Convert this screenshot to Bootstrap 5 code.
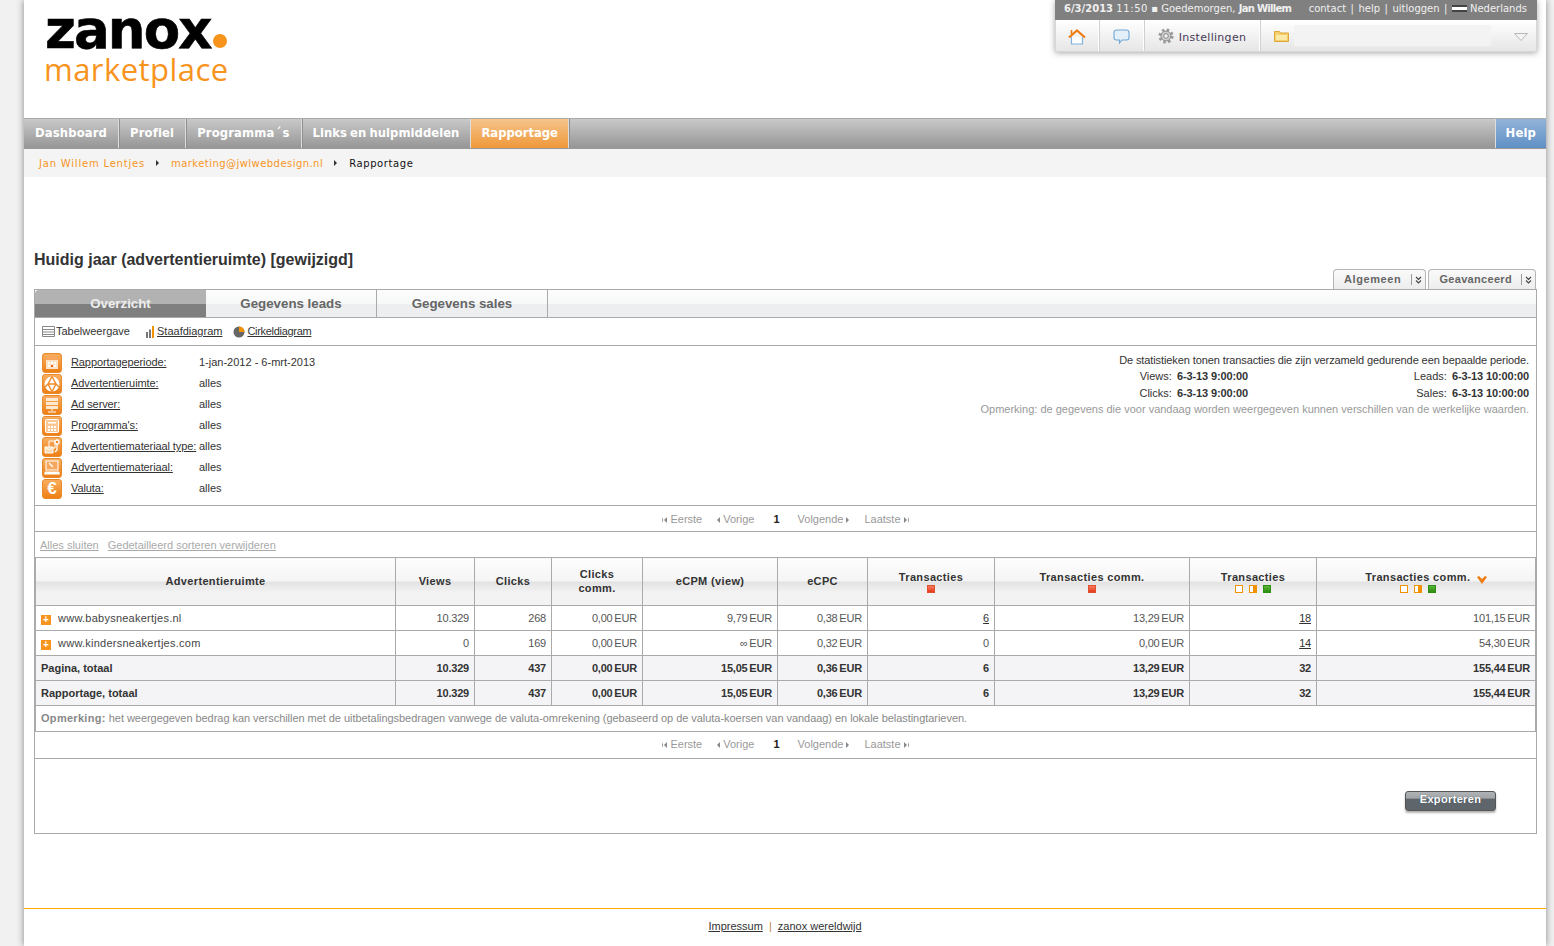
<!DOCTYPE html>
<html lang="nl">

<head>
    <meta charset="UTF-8">
    <meta name="viewport" content="width=device-width, initial-scale=1">
    <title>zanox marketplace - Rapportage</title>
    <link href="https://cdn.jsdelivr.net/npm/bootstrap@5.3.2/dist/css/bootstrap.min.css" rel="stylesheet">
    <script src="https://cdn.jsdelivr.net/npm/bootstrap@5.3.2/dist/js/bootstrap.bundle.min.js"></script>
    <style>
        body {
            background: #f1f1f1;
            font-family: "Liberation Sans", Arial, sans-serif;
            font-size: 11px;
            color: #333;
            line-height: 1.2;
        }

        a {
            color: #333;
        }

        .page-wrap {
            width: 1522px;
            height: 946px;
            margin-left: 24px;
            background: #fff;
            box-shadow: 0 0 7px rgba(0, 0, 0, .45);
            overflow: hidden;
        }

        /* kop */
        .site-head {
            height: 118px;
        }

        .logo-box {
            padding: 0 0 0 21px;
            width: 300px;
        }

        .logo-top {
            font-family: "DejaVu Sans", sans-serif;
            font-weight: 700;
            font-size: 53px;
            line-height: 40px;
            letter-spacing: -1.9px;
            color: #000;
            padding-top: 10px;
            -webkit-text-stroke: .6px #000;
        }

        .logo-dot {
            display: inline-block;
            width: 14px;
            height: 14px;
            border-radius: 50%;
            background: #f7941d;
            margin-left: 3px;
        }

        .logo-bottom {
            font-family: "Open Sans", sans-serif;
            font-weight: 400;
            font-size: 31px;
            line-height: 38px;
            letter-spacing: .45px;
            color: #f7941d;
            margin: 0 0 0 -1px;
        }

        .user-box {
            width: 482px;
            height: 52px;
            margin-right: 9px;
            box-shadow: 0 1px 6px rgba(0, 0, 0, .35);
        }

        .user-top {
            height: 20px;
            background: #808080;
            color: #f0f0f0;
            font-family: "DejaVu Sans", sans-serif;
            font-size: 10px;
            padding: 0 10px 3px 9px;
            white-space: nowrap;
        }

        .top-time {
            letter-spacing: .6px;
        }

        .top-name {
            letter-spacing: -.7px;
        }

        .top-sep {
            margin: 0 4.500px;
        }

        .flag-nl {
            display: inline-block;
            width: 15px;
            height: 7px;
            background: linear-gradient(#444 0, #444 33%, #fff 33%, #fff 66%, #444 66%);
            margin: 0 3px 0 0;
            vertical-align: -0.5px;
        }

        .user-tools {
            height: 32px;
            background: linear-gradient(#fff, #e6e6e6);
            border: 1px solid #d8d8d8;
            border-top: 0;
        }

        .tool-cell {
            height: 100%;
            border-right: 1px solid #fff;
            box-shadow: 1px 0 0 #d0d0d0;
            margin-right: 1px;
            color: #453a55;
            font-family: "DejaVu Sans", sans-serif;
            letter-spacing: .3px;
        }

        .tool-home { width: 43px; padding-top: 2px; }
        .tool-chat { width: 44px; padding-top: 2px; }
        .tool-set { width: 115px; gap: 5px; }

        .tool-label {
            padding-top: 5px;
        }

        .tool-folder {
            margin-left: 13px;
        }

        .tool-search {
            width: 197px;
            height: 21px;
            background: #f3f3f3;
            margin-left: 5px;
        }

        .tool-caret {
            margin: 2px 0 0 23px;
        }

        /* menu */
        .main-menu {
            height: 31px;
            border-top: 1px solid #aaa;
            border-bottom: 1px solid #999;
            background: linear-gradient(#c9c9c9, #969696);
        }

        .menu-item {
            font-family: "DejaVu Sans", sans-serif;
            font-weight: 700;
            font-size: 11.6px;
            letter-spacing: .15px;
            color: #fff;
            padding: 8px 11px 0;
            text-decoration: none;
            border-right: 1px solid #ddd;
            height: 100%;
            box-shadow: 1px 0 0 #8f8f8f;
        }

        .menu-acute {
            margin: 0 1px;
        }

        .menu-links {
            letter-spacing: .05px;
            word-spacing: -1px;
        }

        .menu-active {
            background: linear-gradient(#f6c48a, #ef983b);
            letter-spacing: 0;
            padding: 8px 10px 0;
        }

        .menu-help {
            background: linear-gradient(#92b3d9, #6090c6);
            margin-left: auto;
            border-right: 0;
            border-left: 1px solid #ddd;
            box-shadow: none;
            padding: 8px 10px 0;
        }

        .crumb-bar {
            height: 28px;
            background: #f4f4f4;
            padding: 2px 0 0 15px;
            font-family: "DejaVu Sans", sans-serif;
            font-size: 10px;
            letter-spacing: .8px;
        }

        .crumb-bar a {
            color: #f7941d;
            text-decoration: none;
        }

        .crumb-bar a.crumb-mail {
            letter-spacing: .45px;
        }

        .crumb-now {
            color: #111;
            letter-spacing: .6px;
            margin-top: -1px;
        }

        .crumb-arrow {
            width: 0;
            height: 0;
            border-top: 3px solid transparent;
            border-bottom: 3px solid transparent;
            border-left: 3px solid #333;
            margin: -3px 12px 0 11px;
        }

        /* titel */
        .title-row {
            height: 112px;
            padding: 0 10px;
        }

        .page-title {
            font-size: 16px;
            font-weight: 700;
            color: #333;
            margin: 0 0 19px;
            line-height: 20px;
        }

        .mode-btn {
            height: 20px;
            background: linear-gradient(#fafafa, #ededed);
            border: 1px solid #b5b5b5;
            border-bottom: 0;
            border-radius: 4px 4px 0 0;
            padding: 0 2px 0 10px;
            font-size: 11px;
            font-weight: 700;
            color: #666;
            letter-spacing: .32px;
            gap: 9px;
        }

        .mode-alg {
            letter-spacing: .6px;
            gap: 10px;
        }

        .mode-btn + .mode-btn {
            margin-left: 2px;
        }

        .mode-sep {
            border-left: 1px solid #999;
            height: 11px;
            padding: 2px 0 0 3px;
            width: 12px;
        }

        .mode-sep svg {
            display: block;
        }

        /* paneel */
        .report-panel {
            margin: 0 9px 0 10px;
            height: 545px;
            border: 1px solid #aaa;
        }

        .tab-bar {
            height: 28px;
            background: linear-gradient(#fcfcfc 0, #f7f8f8 50%, #eceef0 50%, #eceef0 100%);
            border-bottom: 1px solid #aaa;
        }

        .tab-link {
            width: 171px;
            height: 27px;
            display: block;
            text-align: center;
            font-size: 13.3px;
            font-weight: 700;
            line-height: 27px;
            color: #666;
            text-decoration: none;
            border-right: 1px solid #aaa;
        }

        .tab-on {
            color: #eee;
            background: linear-gradient(#b2b2b2 0, #b2b2b2 50%, #7f7f7f 50%, #7f7f7f 100%);
            border-top-left-radius: 4px;
            border-right: 0;
        }

        .view-row {
            height: 28px;
            border-bottom: 1px solid #aaa;
            padding-left: 7px;
        }

        .view-item {
            margin-right: 15px;
        }

        .view-item + .view-item {
            margin-right: 11px;
        }

        .view-item svg {
            margin-right: 1px;
        }

        .view-pie {
            letter-spacing: -.3px;
        }

        .filter-zone {
            height: 160px;
            border-bottom: 1px solid #aaa;
            padding: 6px 7px 0;
        }

        .filter-row {
            height: 21px;
        }

        .filter-icon {
            width: 20px;
            height: 20px;
            border-radius: 3px;
            background: linear-gradient(#f9ad5f, #ee7f14);
            border: 1px solid #e68a2c;
            margin-right: 9px;
            flex: none;
            color: #fff;
            font-size: 17px;
            font-weight: 700;
            line-height: 18px;
            text-align: center;
        }

        .filter-icon svg {
            display: block;
        }

        .filter-name {
            width: 128px;
            flex: none;
            letter-spacing: -.1px;
        }

        .info-line {
            line-height: 16.3px;
        }

        .info-top {
            letter-spacing: -.1px;
        }

        .info-wide {
            width: 281px;
            text-align: right;
        }

        .info-wide b {
            letter-spacing: -.12px;
            margin-left: 2px;
        }

        .info-note {
            color: #999;
        }

        .pager-row {
            height: 26px;
            border-bottom: 1px solid #aaa;
            color: #999;
            gap: 15px;
            padding-top: 3px;
        }

        .pager-low {
            height: 27px;
            padding-top: 0;
        }

        .pager-row b {
            color: #222;
            margin: 0 3px 0 4px;
        }

        .pg-arrow {
            display: inline-block;
            width: 0;
            height: 0;
            border-top: 3px solid transparent;
            border-bottom: 3px solid transparent;
            vertical-align: 0;
        }

        .pg-left {
            border-right: 3px solid #888;
            margin-right: 3px;
        }

        .pg-right {
            border-left: 3px solid #888;
            margin-left: 3px;
        }

        .pg-stop-l {
            border-left: 1px solid #888;
            padding-left: 1px;
        }

        .pg-stop-r {
            border-right: 1px solid #888;
            padding-right: 1px;
        }

        .sort-row {
            height: 25px;
            padding: 3px 0 0 5px;
            gap: 9px;
        }

        .sort-row a {
            color: #aaa;
        }

        .rpt-table {
            table-layout: fixed;
            width: 1501px;
            margin: 0;
            border-collapse: collapse;
            border: 1px solid #aaa;
            font-size: 11px;
            color: #555;
        }

        .w-a { width: 360px; }
        .w-b { width: 79px; }
        .w-c { width: 77px; }
        .w-d { width: 91px; }
        .w-e { width: 135px; }
        .w-f { width: 90px; }
        .w-g { width: 127px; }
        .w-h { width: 195px; }
        .w-i { width: 219px; }

        .rpt-table th {
            height: 48px;
            padding: 0 5px;
            text-align: center;
            vertical-align: middle;
            border: 1px solid #aaa;
            color: #333;
            font-weight: 700;
            letter-spacing: .35px;
            background-color: transparent;
            background-image: linear-gradient(#fdfdfd 0, #f5f5f5 48%, #e2e2e2 50%, #f3f3f3 72%, #f3f3f3 100%);
        }

        .rpt-table th.th-legend {
            padding-top: 6px;
        }

        .rpt-table td {
            height: 25px;
            padding: 1px 5px 0;
            text-align: right;
            vertical-align: middle;
            border: 1px solid #aaa;
            color: #555;
            background-color: #fff;
            letter-spacing: -.2px;
            word-spacing: -1px;
        }

        .rpt-table td.cell-name {
            text-align: left;
            color: #444;
            letter-spacing: 0;
            word-spacing: 0;
        }

        .rpt-table .total-row td {
            background-color: #f4f4f6;
            color: #333;
            font-weight: 700;
        }

        .rpt-table .total-row td.cell-name {
            color: #333;
        }

        .rpt-table td.note-cell {
            text-align: left;
            color: #888;
            height: 26px;
            letter-spacing: -.045px;
            word-spacing: 0;
        }

        .note-cell b {
            letter-spacing: .3px;
        }

        .plus-box {
            display: inline-block;
            width: 10px;
            height: 10px;
            background: #f7941d;
            color: #fff;
            font-size: 10px;
            font-weight: 700;
            line-height: 9px;
            text-align: center;
            margin-right: 7px;
            vertical-align: -1px;
        }

        .site-url {
            letter-spacing: .25px;
        }

        .th-mark {
            display: inline-block;
            width: 8px;
            height: 8px;
            margin: 0 3px;
            vertical-align: top;
        }

        .mark-red {
            background: linear-gradient(#f77b5f, #e63a1c);
            border: 1px solid #e0502f;
        }

        .mark-open {
            background: #fff;
            border: 1px solid #f39200;
        }

        .mark-half {
            background: linear-gradient(90deg, #fff 0, #fff 50%, #f39200 50%);
            border: 1px solid #f39200;
        }

        .mark-green {
            background: linear-gradient(#5cb535, #2c8e12);
            border: 1px solid #2c8e12;
        }

        .th-shift {
            display: inline-block;
            margin-right: 16px;
        }

        .sort-mark {
            margin-left: 3px;
            vertical-align: -3px;
        }

        .export-zone {
            padding: 32px 40px 0 0;
        }

        .export-btn {
            width: 91px;
            height: 20px;
            padding: 0 0 4px;
            border: 1px solid #555;
            border-radius: 3px;
            background: linear-gradient(#b0b3b6 0, #a2a5a8 35%, #5f666b 38%, #5f666b 100%);
            color: #fff;
            font-size: 11px;
            font-weight: 700;
            line-height: 14px;
            letter-spacing: .35px;
            box-shadow: 0 2px 2px rgba(0, 0, 0, .3);
            text-shadow: 0 0 1px #345;
            display: block;
        }

        .foot-line {
            height: 1px;
            margin-top: 74px;
            background: #ffa800;
        }

        .site-foot {
            padding-top: 11px;
            text-align: center;
        }

        .site-foot span {
            margin: 0 3px;
            color: #c08040;
        }
    </style>
</head>

<body>
    <div class="page-wrap">

        <!-- kop -->
        <header class="site-head d-flex justify-content-between">
            <div class="logo-box">
                <div class="logo-top">zanox<span class="logo-dot"></span></div>
                <div class="logo-bottom">marketplace</div>
            </div>
            <div class="user-box">
                <div class="user-top d-flex justify-content-between align-items-center">
                    <div><b>6/3/2013</b> <span class="top-time">11:50</span> ▪ Goedemorgen, <b class="top-name">Jan Willem</b></div>
                    <div>contact<span class="top-sep">|</span>help<span class="top-sep">|</span>uitloggen<span class="top-sep">|</span><span class="flag-nl"></span>Nederlands</div>
                </div>
                <div class="user-tools d-flex align-items-center">
                    <div class="tool-cell tool-home d-flex align-items-center justify-content-center">
                        <svg width="18" height="16" viewBox="0 0 18 16">
                            <path d="M3.5 8v7h11V8" fill="#fff" stroke="#7fb2dc" stroke-width="1.2" />
                            <path d="M1 8.5 9 1.5l8 7" fill="none" stroke="#ee7d11" stroke-width="2.2" />
                            <path d="M3.5 1v4" stroke="#ee7d11" stroke-width="1.6" />
                        </svg>
                    </div>
                    <div class="tool-cell tool-chat d-flex align-items-center justify-content-center">
                        <svg width="17" height="16" viewBox="0 0 17 16">
                            <path d="M3.5 1h10a2.500 2.500 0 0 1 2.500 2.500v5a2.500 2.500 0 0 1-2.500 2.500H9l-2.500 3v-3h-3A2.500 2.500 0 0 1 1 8.500v-5A2.500 2.500 0 0 1 3.500 1z" fill="#e4eff9" stroke="#6ea7d6" stroke-width="1.100" />
                        </svg>
                    </div>
                    <div class="tool-cell tool-set d-flex align-items-center justify-content-center">
                        <svg width="16" height="16" viewBox="0 0 16 16">
                            <circle cx="8" cy="8" r="6.300" fill="none" stroke="#9a9a9a" stroke-width="2.600" stroke-dasharray="2.500 2.450" />
                            <circle cx="8" cy="8" r="5" fill="#ccc" stroke="#888" stroke-width="1" />
                            <circle cx="8" cy="8" r="2.300" fill="#f2f2f2" stroke="#888" stroke-width="1" />
                        </svg>
                        <span class="tool-label">Instellingen</span>
                    </div>
                    <svg class="tool-folder" width="15" height="12" viewBox="0 0 15 12">
                        <path d="M.5 1.500h5l1 1.500h8v8.500H.5z" fill="#f4cf6a" stroke="#dfa63a" />
                        <rect x="2" y="5" width="11" height="5" fill="#fbe9a8" />
                    </svg>
                    <div class="tool-search"></div>
                    <svg class="tool-caret" width="14" height="8" viewBox="0 0 14 8">
                        <path d="M.5.500h13L7 7.500z" fill="#f4f4f4" stroke="#b8b8b8" />
                    </svg>
                </div>
            </div>
        </header>

        <!-- menu -->
        <nav class="main-menu d-flex">
            <a class="menu-item" href="#">Dashboard</a>
            <a class="menu-item" href="#">Profiel</a>
            <a class="menu-item" href="#">Programma<span class="menu-acute">´</span>s</a>
            <a class="menu-item menu-links" href="#">Links en hulpmiddelen</a>
            <a class="menu-item menu-active" href="#">Rapportage</a>
            <a class="menu-item menu-help" href="#">Help</a>
        </nav>
        <div class="crumb-bar d-flex align-items-center">
            <a href="#">Jan Willem Lentjes</a>
            <span class="crumb-arrow"></span>
            <a class="crumb-mail" href="#">marketing@jwlwebdesign.nl</a>
            <span class="crumb-arrow"></span>
            <span class="crumb-now">Rapportage</span>
        </div>

        <!-- titel -->
        <div class="title-row d-flex justify-content-between align-items-end">
            <h1 class="page-title">Huidig jaar (advertentieruimte) [gewijzigd]</h1>
            <div class="d-flex">
                <div class="mode-btn mode-alg d-flex align-items-center">Algemeen <span class="mode-sep"><svg width="7" height="8" viewBox="0 0 7 8"><path d="M1 1l2.500 2.500L6 1M1 4.500 3.500 7 6 4.500" fill="none" stroke="#444" stroke-width="1.100" /></svg></span></div>
                <div class="mode-btn d-flex align-items-center">Geavanceerd <span class="mode-sep"><svg width="7" height="8" viewBox="0 0 7 8"><path d="M1 1l2.500 2.500L6 1M1 4.500 3.500 7 6 4.500" fill="none" stroke="#444" stroke-width="1.100" /></svg></span></div>
            </div>
        </div>

        <!-- paneel -->
        <section class="report-panel">
            <ul class="nav tab-bar">
                <li><a class="tab-link tab-on" href="#">Overzicht</a></li>
                <li><a class="tab-link" href="#">Gegevens leads</a></li>
                <li><a class="tab-link" href="#">Gegevens sales</a></li>
            </ul>

            <div class="view-row d-flex align-items-center">
                <div class="view-item d-flex align-items-center">
                    <svg width="13" height="11" viewBox="0 0 13 11">
                        <path d="M.5.500h12v10H.5zM.5 3.500h12M.5 6h12M.5 8.500h12" fill="#fff" stroke="#888" />
                    </svg>
                    <span>Tabelweergave</span>
                </div>
                <div class="view-item d-flex align-items-center">
                    <svg width="11" height="12" viewBox="0 0 11 12">
                        <rect x="1" y="6" width="2" height="6" fill="#777" />
                        <rect x="4" y="3.500" width="2" height="8.500" fill="#777" />
                        <rect x="7" y="0" width="2" height="12" fill="#f39200" />
                    </svg>
                    <a href="#">Staafdiagram</a>
                </div>
                <div class="view-item d-flex align-items-center">
                    <svg width="13" height="12" viewBox="0 0 13 12">
                        <circle cx="6" cy="6" r="5.500" fill="#666" />
                        <path d="M6 6V.500A5.500 5.500 0 0 1 11.500 6z" fill="#f39200" />
                    </svg>
                    <a class="view-pie" href="#">Cirkeldiagram</a>
                </div>
            </div>

            <div class="filter-zone d-flex justify-content-between">
                <div>
                    <div class="filter-row d-flex align-items-center">
                        <span class="filter-icon">
                            <svg width="18" height="18" viewBox="0 0 18 18">
                                <rect x="3" y="3" width="12" height="12" fill="#fde3c6" />
                                <rect x="3" y="3" width="12" height="3" fill="#f6a860" />
                                <path d="M5 8h2v2H5zM8 8h2v2H8zM11 8h2v2h-2zM5 11h2v2H5zM11 11h2v2h-2z" fill="#fff" />
                                <rect x="8" y="11" width="2" height="2" fill="#e8641b" />
                            </svg>
                        </span>
                        <a class="filter-name" href="#">Rapportageperiode:</a><span>1-jan-2012 - 6-mrt-2013</span>
                    </div>
                    <div class="filter-row d-flex align-items-center">
                        <span class="filter-icon">
                            <svg width="18" height="18" viewBox="0 0 18 18">
                                <circle cx="9" cy="9" r="7.500" fill="#fff" />
                                <path d="M9 1.500 5 9l-3 3M9 1.500 13 9l3 3M5 9h8M5 9l4 7.500L13 9" fill="none" stroke="#f08a24" stroke-width="1.400" />
                            </svg>
                        </span>
                        <a class="filter-name" href="#">Advertentieruimte:</a><span>alles</span>
                    </div>
                    <div class="filter-row d-flex align-items-center">
                        <span class="filter-icon">
                            <svg width="18" height="18" viewBox="0 0 18 18">
                                <path d="M3 2h12v3H3zM3 6h12v3H3zM3 10h12v3H3z" fill="#fde8d0" />
                                <path d="M8.500 13h1v2h-1zM5 15.500h8v1H5z" fill="#fff" />
                            </svg>
                        </span>
                        <a class="filter-name" href="#">Ad server:</a><span>alles</span>
                    </div>
                    <div class="filter-row d-flex align-items-center">
                        <span class="filter-icon">
                            <svg width="18" height="18" viewBox="0 0 18 18">
                                <rect x="2.500" y="2.500" width="13" height="13" rx="1" fill="#fbc894" stroke="#fff" />
                                <path d="M5 5h8v1.500H5z" fill="#fff" />
                                <path d="M5 9h2v2H5zM8 9h2v2H8zM11 9h2v2h-2zM5 12h2v2H5zM8 12h2v2H8zM11 12h2v2h-2z" fill="#fff" />
                            </svg>
                        </span>
                        <a class="filter-name" href="#">Programma's:</a><span>alles</span>
                    </div>
                    <div class="filter-row d-flex align-items-center">
                        <span class="filter-icon">
                            <svg width="18" height="18" viewBox="0 0 18 18">
                                <path d="M6 3h6v7H6z" fill="none" stroke="#fff" />
                                <path d="M2 9h8v6H2z" fill="#fbd8b0" stroke="#fff" />
                                <path d="M2 9l4 3 4-3" fill="none" stroke="#fff" />
                                <circle cx="14" cy="4" r="2" fill="#f08a24" stroke="#fff" stroke-width="1.300" />
                                <path d="M14 6v6l-2 2" fill="none" stroke="#fff" stroke-width="1.300" />
                            </svg>
                        </span>
                        <a class="filter-name" href="#">Advertentiemateriaal type:</a><span>alles</span>
                    </div>
                    <div class="filter-row d-flex align-items-center">
                        <span class="filter-icon">
                            <svg width="18" height="18" viewBox="0 0 18 18">
                                <rect x="3" y="2" width="12" height="9" fill="#f7a860" stroke="#fff" />
                                <path d="M6 4l4 4" stroke="#fff" stroke-width="1.200" />
                                <path d="M2 12.500h14l1 3H1z" fill="#fff" />
                            </svg>
                        </span>
                        <a class="filter-name" href="#">Advertentiemateriaal:</a><span>alles</span>
                    </div>
                    <div class="filter-row d-flex align-items-center">
                        <span class="filter-icon">€</span>
                        <a class="filter-name" href="#">Valuta:</a><span>alles</span>
                    </div>
                </div>
                <div class="text-end">
                    <div class="info-line info-top">De statistieken tonen transacties die zijn verzameld gedurende een bepaalde periode.</div>
                    <div class="info-line d-flex justify-content-end">
                        <div class="info-wide">Views: <b>6-3-13 9:00:00</b></div>
                        <div class="info-wide">Leads: <b>6-3-13 10:00:00</b></div>
                    </div>
                    <div class="info-line d-flex justify-content-end">
                        <div class="info-wide">Clicks: <b>6-3-13 9:00:00</b></div>
                        <div class="info-wide">Sales: <b>6-3-13 10:00:00</b></div>
                    </div>
                    <div class="info-line info-note">Opmerking: de gegevens die voor vandaag worden weergegeven kunnen verschillen van de werkelijke waarden.</div>
                </div>
            </div>

            <div class="pager-row d-flex align-items-center justify-content-center">
                <span><i class="pg-arrow pg-left pg-stop-l"></i>Eerste</span>
                <span><i class="pg-arrow pg-left"></i>Vorige</span>
                <b>1</b>
                <span>Volgende<i class="pg-arrow pg-right"></i></span>
                <span>Laatste<i class="pg-arrow pg-right pg-stop-r"></i></span>
            </div>

            <div class="sort-row d-flex align-items-center">
                <a href="#">Alles sluiten</a>
                <a href="#">Gedetailleerd sorteren verwijderen</a>
            </div>

            <table class="table rpt-table">
                <colgroup>
                    <col class="w-a">
                    <col class="w-b">
                    <col class="w-c">
                    <col class="w-d">
                    <col class="w-e">
                    <col class="w-f">
                    <col class="w-g">
                    <col class="w-h">
                    <col class="w-g">
                    <col class="w-i">
                </colgroup>
                <thead>
                    <tr>
                        <th>Advertentieruimte</th>
                        <th>Views</th>
                        <th>Clicks</th>
                        <th>Clicks<br>comm.</th>
                        <th>eCPM (view)</th>
                        <th>eCPC</th>
                        <th class="th-legend">Transacties<br><span class="th-mark mark-red"></span></th>
                        <th class="th-legend">Transacties comm.<br><span class="th-mark mark-red"></span></th>
                        <th class="th-legend">Transacties<br><span class="th-mark mark-open"></span><span class="th-mark mark-half"></span><span class="th-mark mark-green"></span></th>
                        <th class="th-legend">Transacties comm.
                            <svg class="sort-mark" width="10" height="8" viewBox="0 0 10 8">
                                <path d="M0 1l2-1 3 3 3-3 2 1-5 7z" fill="#ee7d11" />
                            </svg><br><span class="th-shift"><span class="th-mark mark-open"></span><span class="th-mark mark-half"></span><span class="th-mark mark-green"></span></span>
                        </th>
                    </tr>
                </thead>
                <tbody>
                    <tr>
                        <td class="cell-name"><span class="plus-box">+</span><span class="site-url">www.babysneakertjes.nl</span></td>
                        <td>10.329</td>
                        <td>268</td>
                        <td>0,00 EUR</td>
                        <td>9,79 EUR</td>
                        <td>0,38 EUR</td>
                        <td><a href="#">6</a></td>
                        <td>13,29 EUR</td>
                        <td><a href="#">18</a></td>
                        <td>101,15 EUR</td>
                    </tr>
                    <tr>
                        <td class="cell-name"><span class="plus-box">+</span><span class="site-url">www.kindersneakertjes.com</span></td>
                        <td>0</td>
                        <td>169</td>
                        <td>0,00 EUR</td>
                        <td>∞ EUR</td>
                        <td>0,32 EUR</td>
                        <td>0</td>
                        <td>0,00 EUR</td>
                        <td><a href="#">14</a></td>
                        <td>54,30 EUR</td>
                    </tr>
                    <tr class="total-row">
                        <td class="cell-name">Pagina, totaal</td>
                        <td>10.329</td>
                        <td>437</td>
                        <td>0,00 EUR</td>
                        <td>15,05 EUR</td>
                        <td>0,36 EUR</td>
                        <td>6</td>
                        <td>13,29 EUR</td>
                        <td>32</td>
                        <td>155,44 EUR</td>
                    </tr>
                    <tr class="total-row">
                        <td class="cell-name">Rapportage, totaal</td>
                        <td>10.329</td>
                        <td>437</td>
                        <td>0,00 EUR</td>
                        <td>15,05 EUR</td>
                        <td>0,36 EUR</td>
                        <td>6</td>
                        <td>13,29 EUR</td>
                        <td>32</td>
                        <td>155,44 EUR</td>
                    </tr>
                    <tr>
                        <td class="note-cell" colspan="10"><b>Opmerking:</b> het weergegeven bedrag kan verschillen met de uitbetalingsbedragen vanwege de valuta-omrekening (gebaseerd op de valuta-koersen van vandaag) en lokale belastingtarieven.</td>
                    </tr>
                </tbody>
            </table>

            <div class="pager-row pager-low d-flex align-items-center justify-content-center">
                <span><i class="pg-arrow pg-left pg-stop-l"></i>Eerste</span>
                <span><i class="pg-arrow pg-left"></i>Vorige</span>
                <b>1</b>
                <span>Volgende<i class="pg-arrow pg-right"></i></span>
                <span>Laatste<i class="pg-arrow pg-right pg-stop-r"></i></span>
            </div>

            <div class="export-zone d-flex justify-content-end">
                <button class="export-btn" type="button">Exporteren</button>
            </div>
        </section>

        <div class="foot-line"></div>
        <footer class="site-foot">
            <a href="#">Impressum</a> <span>|</span> <a href="#">zanox wereldwijd</a>
        </footer>
    </div>
</body>

</html>
